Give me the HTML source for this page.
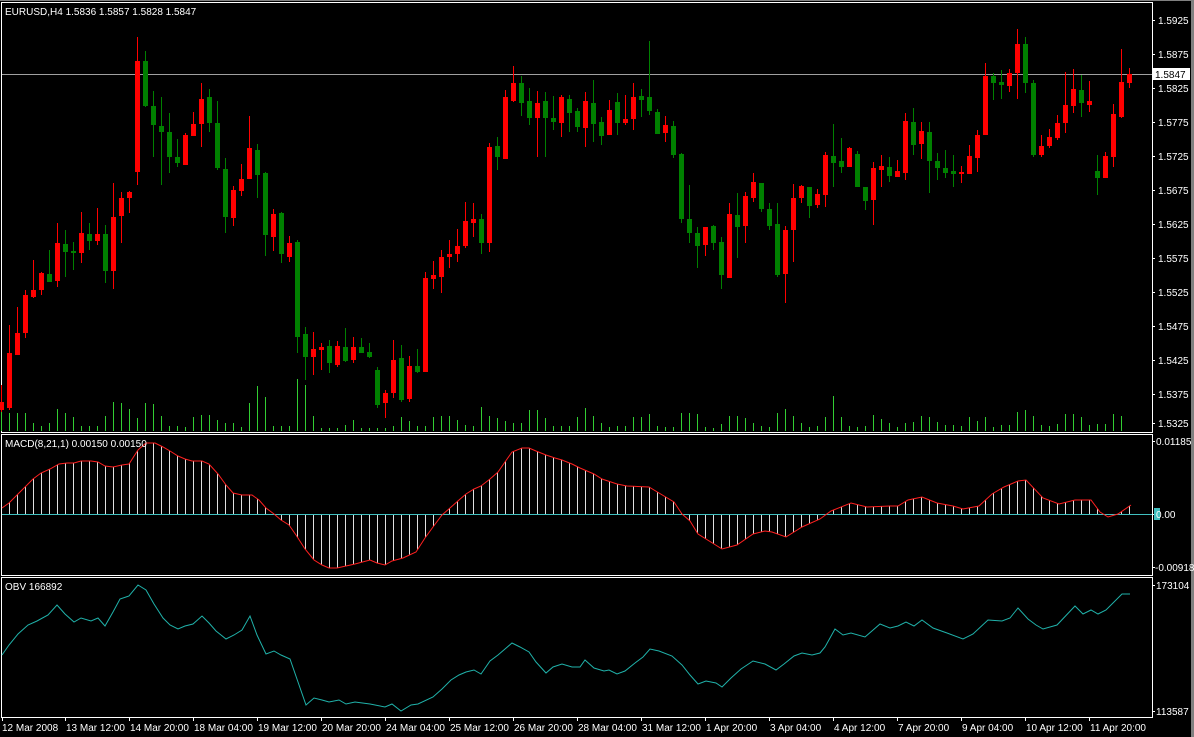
<!DOCTYPE html>
<html><head><meta charset="utf-8"><style>
html,body{margin:0;padding:0;background:#000;}
svg{display:block}
text{font-family:"Liberation Sans",sans-serif;font-size:10px;fill:#fff}
</style></head><body>
<svg width="1194" height="737" viewBox="0 0 1194 737" xmlns="http://www.w3.org/2000/svg">
<defs>
<pattern id="h" patternUnits="userSpaceOnUse" x="1" y="0" width="8" height="737"><rect x="0" y="0" width="1" height="737" fill="#e0e0e0"/></pattern>
</defs>
<rect width="1194" height="737" fill="#000"/>
<rect x="0" y="0" width="1194" height="1" fill="#808080"/>
<rect x="1191" y="0" width="3" height="737" fill="#808080"/>
<g fill="none" stroke="#fff" stroke-width="1">
<rect x="1.5" y="2.5" width="1151" height="430"/>
<rect x="1.5" y="434.5" width="1151" height="141"/>
<rect x="1.5" y="577.5" width="1151" height="140"/>
</g>
<path d="M2 74.5H1152" stroke="#a0a0a0" stroke-width="1"/>
<path stroke="#32cd32" stroke-width="1" d="M1.5 431V412M9.5 431V413M17.5 431V413M25.5 431V413M33.5 431V423M41.5 431V426M49.5 431V423M57.5 431V409M65.5 431V413M73.5 431V417M81.5 431V426M89.5 431V426M97.5 431V426M105.5 431V416M113.5 431V402M121.5 431V403M129.5 431V409M137.5 431V418M145.5 431V403M153.5 431V404M161.5 431V416M169.5 431V426M177.5 431V426M185.5 431V427M193.5 431V417M201.5 431V415M209.5 431V415M217.5 431V420M225.5 431V423M233.5 431V423M241.5 431V427M249.5 431V403M257.5 431V386M265.5 431V397M273.5 431V426M281.5 431V426M289.5 431V426M297.5 431V379M305.5 431V385M313.5 431V416M321.5 431V428M329.5 431V428M337.5 431V428M345.5 431V425M353.5 431V420M361.5 431V428M369.5 431V428M377.5 431V428M385.5 431V428M393.5 431V426M401.5 431V417M409.5 431V421M417.5 431V426M425.5 431V426M433.5 431V417M441.5 431V416M449.5 431V416M457.5 431V420M465.5 431V425M473.5 431V426M481.5 431V407M489.5 431V416M497.5 431V418M505.5 431V421M513.5 431V423M521.5 431V423M529.5 431V410M537.5 431V410M545.5 431V418M553.5 431V426M561.5 431V426M569.5 431V426M577.5 431V417M585.5 431V408M593.5 431V416M601.5 431V423M609.5 431V427M617.5 431V426M625.5 431V426M633.5 431V417M641.5 431V417M649.5 431V414M657.5 431V426M665.5 431V427M673.5 431V427M681.5 431V413M689.5 431V413M697.5 431V414M705.5 431V427M713.5 431V428M721.5 431V424M729.5 431V416M737.5 431V416M745.5 431V418M753.5 431V423M761.5 431V426M769.5 431V427M777.5 431V413M785.5 431V409M793.5 431V416M801.5 431V423M809.5 431V427M817.5 431V426M825.5 431V417M833.5 431V396M841.5 431V417M849.5 431V426M857.5 431V427M865.5 431V426M873.5 431V415M881.5 431V419M889.5 431V423M897.5 431V427M905.5 431V423M913.5 431V422M921.5 431V416M929.5 431V417M937.5 431V422M945.5 431V425M953.5 431V425M961.5 431V426M969.5 431V417M977.5 431V421M985.5 431V417M993.5 431V427M1001.5 431V425M1009.5 431V425M1017.5 431V412M1025.5 431V410M1033.5 431V416M1041.5 431V425M1049.5 431V426M1057.5 431V424M1065.5 431V414M1073.5 431V414M1081.5 431V417M1089.5 431V425M1097.5 431V424M1105.5 431V424M1113.5 431V414M1121.5 431V416"/>
<path stroke="#ff0000" stroke-width="1" d="M1.5 385V412M9.5 325V410M17.5 307V355M25.5 290V338M33.5 260V298M41.5 272V295M57.5 223V287M81.5 212V263M97.5 208V245M113.5 183V289M121.5 192V243M129.5 191V213M137.5 37V185M185.5 133V165M193.5 112V136M201.5 83V147M233.5 186V226M241.5 164V196M249.5 116V179M273.5 209V251M289.5 236V262M313.5 332V375M321.5 343V370M337.5 341V367M353.5 337V363M385.5 390V418M393.5 340V398M409.5 356V402M425.5 272V372M433.5 261V289M441.5 250V293M449.5 240V268M457.5 229V262M465.5 202V248M473.5 203V237M489.5 143V252M505.5 90V159M513.5 66V102M537.5 91V157M561.5 95V137M585.5 92V147M609.5 100V135M625.5 95V125M633.5 83V130M665.5 116V142M705.5 227V256M729.5 203V278M745.5 192V243M753.5 173V202M785.5 226V303M793.5 184V262M801.5 185V203M817.5 189V208M825.5 152V207M849.5 147V167M873.5 162V225M881.5 155V187M897.5 160V177M905.5 113V180M921.5 122V159M961.5 166V183M969.5 145V174M977.5 130V172M985.5 63V135M1009.5 69V92M1017.5 29V99M1041.5 135V157M1049.5 129V148M1057.5 115V140M1065.5 72V133M1073.5 69V113M1089.5 81V112M1105.5 152V178M1113.5 104V167M1121.5 49V118M1129.5 68V88"/>
<g fill="#ff0000">
<rect x="-1" y="402" width="5" height="8"/><rect x="7" y="353" width="5" height="55"/><rect x="15" y="333" width="5" height="22"/><rect x="23" y="295" width="5" height="38"/><rect x="31" y="290" width="5" height="7"/><rect x="39" y="273" width="5" height="17"/><rect x="55" y="243" width="5" height="38"/><rect x="79" y="233" width="5" height="20"/><rect x="95" y="234" width="5" height="7"/><rect x="111" y="217" width="5" height="54"/><rect x="119" y="198" width="5" height="18"/><rect x="127" y="192" width="5" height="6"/><rect x="135" y="61" width="5" height="111"/><rect x="183" y="135" width="5" height="30"/><rect x="191" y="124" width="5" height="12"/><rect x="199" y="99" width="5" height="25"/><rect x="231" y="190" width="5" height="28"/><rect x="239" y="179" width="5" height="12"/><rect x="247" y="148" width="5" height="31"/><rect x="271" y="214" width="5" height="23"/><rect x="287" y="243" width="5" height="14"/><rect x="311" y="349" width="5" height="8"/><rect x="319" y="347" width="5" height="3"/><rect x="335" y="346" width="5" height="19"/><rect x="351" y="347" width="5" height="13"/><rect x="383" y="393" width="5" height="10"/><rect x="391" y="360" width="5" height="33"/><rect x="407" y="366" width="5" height="33"/><rect x="423" y="278" width="5" height="94"/><rect x="431" y="275" width="5" height="4"/><rect x="439" y="257" width="5" height="20"/><rect x="447" y="254" width="5" height="3"/><rect x="455" y="246" width="5" height="8"/><rect x="463" y="221" width="5" height="25"/><rect x="471" y="219" width="5" height="4"/><rect x="487" y="147" width="5" height="96"/><rect x="503" y="97" width="5" height="62"/><rect x="511" y="83" width="5" height="18"/><rect x="535" y="103" width="5" height="15"/><rect x="559" y="97" width="5" height="26"/><rect x="583" y="101" width="5" height="27"/><rect x="607" y="110" width="5" height="25"/><rect x="623" y="119" width="5" height="4"/><rect x="631" y="97" width="5" height="22"/><rect x="663" y="125" width="5" height="8"/><rect x="703" y="227" width="5" height="18"/><rect x="727" y="214" width="5" height="64"/><rect x="743" y="196" width="5" height="30"/><rect x="751" y="182" width="5" height="16"/><rect x="783" y="230" width="5" height="44"/><rect x="791" y="198" width="5" height="32"/><rect x="799" y="186" width="5" height="12"/><rect x="815" y="194" width="5" height="11"/><rect x="823" y="155" width="5" height="40"/><rect x="847" y="148" width="5" height="19"/><rect x="871" y="168" width="5" height="32"/><rect x="879" y="166" width="5" height="4"/><rect x="895" y="171" width="5" height="6"/><rect x="903" y="121" width="5" height="52"/><rect x="919" y="131" width="5" height="13"/><rect x="959" y="172" width="5" height="2"/><rect x="967" y="156" width="5" height="18"/><rect x="975" y="135" width="5" height="23"/><rect x="983" y="76" width="5" height="59"/><rect x="1007" y="73" width="5" height="13"/><rect x="1015" y="44" width="5" height="29"/><rect x="1039" y="146" width="5" height="9"/><rect x="1047" y="137" width="5" height="9"/><rect x="1055" y="123" width="5" height="15"/><rect x="1063" y="105" width="5" height="18"/><rect x="1071" y="89" width="5" height="17"/><rect x="1087" y="101" width="5" height="4"/><rect x="1103" y="156" width="5" height="22"/><rect x="1111" y="114" width="5" height="43"/><rect x="1119" y="82" width="5" height="35"/><rect x="1127" y="74" width="5" height="9"/>
</g>
<path stroke="#008000" stroke-width="1" d="M49.5 250V282M65.5 230V277M73.5 242V270M89.5 223V250M105.5 225V283M145.5 51V107M153.5 91V157M161.5 97V185M169.5 113V173M177.5 139V167M209.5 89V132M217.5 101V170M225.5 158V233M257.5 144V198M265.5 172V256M281.5 212V263M297.5 240V353M305.5 327V380M329.5 340V373M345.5 328V362M361.5 338V353M369.5 343V358M377.5 367V408M401.5 345V402M417.5 349V373M481.5 214V254M497.5 137V170M521.5 76V116M529.5 88V125M545.5 92V157M553.5 96V130M569.5 95V132M577.5 108V132M593.5 80V142M601.5 117V145M617.5 93V135M641.5 89V117M649.5 41V115M657.5 109V134M673.5 121V158M681.5 153V223M689.5 185V243M697.5 227V268M713.5 225V250M721.5 237V289M737.5 193V258M761.5 183V212M769.5 203V230M777.5 203V277M809.5 187V218M833.5 124V187M841.5 138V173M857.5 151V187M865.5 187V210M889.5 157V182M913.5 108V155M929.5 122V193M937.5 153V180M945.5 150V178M953.5 155V187M993.5 73V100M1001.5 70V99M1025.5 37V93M1033.5 80V157M1081.5 75V117M1097.5 155V195"/>
<g fill="#008000">
<rect x="47" y="274" width="5" height="8"/><rect x="63" y="244" width="5" height="8"/><rect x="71" y="251" width="5" height="2"/><rect x="87" y="234" width="5" height="7"/><rect x="103" y="234" width="5" height="37"/><rect x="143" y="61" width="5" height="45"/><rect x="151" y="106" width="5" height="19"/><rect x="159" y="126" width="5" height="6"/><rect x="167" y="132" width="5" height="25"/><rect x="175" y="157" width="5" height="6"/><rect x="207" y="97" width="5" height="26"/><rect x="215" y="123" width="5" height="45"/><rect x="223" y="169" width="5" height="48"/><rect x="255" y="150" width="5" height="25"/><rect x="263" y="173" width="5" height="62"/><rect x="279" y="213" width="5" height="41"/><rect x="295" y="242" width="5" height="95"/><rect x="303" y="334" width="5" height="23"/><rect x="327" y="346" width="5" height="17"/><rect x="343" y="347" width="5" height="14"/><rect x="359" y="347" width="5" height="6"/><rect x="367" y="352" width="5" height="5"/><rect x="375" y="370" width="5" height="35"/><rect x="399" y="358" width="5" height="42"/><rect x="415" y="366" width="5" height="6"/><rect x="479" y="219" width="5" height="24"/><rect x="495" y="146" width="5" height="11"/><rect x="519" y="83" width="5" height="20"/><rect x="527" y="101" width="5" height="17"/><rect x="543" y="101" width="5" height="17"/><rect x="551" y="118" width="5" height="4"/><rect x="567" y="99" width="5" height="14"/><rect x="575" y="111" width="5" height="16"/><rect x="591" y="103" width="5" height="21"/><rect x="599" y="122" width="5" height="14"/><rect x="615" y="102" width="5" height="21"/><rect x="639" y="96" width="5" height="4"/><rect x="647" y="97" width="5" height="14"/><rect x="655" y="112" width="5" height="22"/><rect x="671" y="126" width="5" height="29"/><rect x="679" y="154" width="5" height="65"/><rect x="687" y="219" width="5" height="14"/><rect x="695" y="233" width="5" height="13"/><rect x="711" y="226" width="5" height="17"/><rect x="719" y="242" width="5" height="33"/><rect x="735" y="215" width="5" height="12"/><rect x="759" y="183" width="5" height="26"/><rect x="767" y="209" width="5" height="17"/><rect x="775" y="224" width="5" height="51"/><rect x="807" y="187" width="5" height="19"/><rect x="831" y="156" width="5" height="7"/><rect x="839" y="161" width="5" height="6"/><rect x="855" y="154" width="5" height="33"/><rect x="863" y="187" width="5" height="14"/><rect x="887" y="167" width="5" height="9"/><rect x="911" y="122" width="5" height="23"/><rect x="927" y="132" width="5" height="29"/><rect x="935" y="161" width="5" height="7"/><rect x="943" y="168" width="5" height="5"/><rect x="951" y="171" width="5" height="3"/><rect x="991" y="76" width="5" height="7"/><rect x="999" y="82" width="5" height="3"/><rect x="1023" y="44" width="5" height="39"/><rect x="1031" y="83" width="5" height="72"/><rect x="1079" y="90" width="5" height="13"/><rect x="1095" y="171" width="5" height="7"/>
</g>
<path fill="url(#h)" d="M2 508L9 503L18 494L33 479L41 473L50 469L59 464L67 463L74 463L81 461L91 461L98 462L105 466L113 467L122 465L129 464L138 450L146 443L155 443L163 447L170 451L178 456L185 459L192 461L202 461L209 464L218 474L226 485L233 493L242 495L252 495L259 500L266 508L274 514L281 520L289 525L296 535L305 549L314 560L322 565L329 568L337 568L346 566L355 564L370 560L377 563L385 565L392 561L403 558L416 552L425 538L433 527L442 515L450 508L459 500L466 494L474 489L481 486L490 479L498 472L505 462L512 452L522 448L529 448L536 451L546 455L555 458L562 460L572 464L580 468L594 474L602 479L617 484L627 486L649 487L659 493L674 502L682 514L690 521L698 534L714 544L722 549L737 545L753 534L765 531L772 532L786 537L802 527L820 519L831 511L851 503L867 507L890 506L898 506L908 500L922 497L937 503L953 506L963 509L979 506L992 494L1004 487L1018 481L1026 480L1043 498L1059 504L1075 500L1091 500L1100 512L1108 517L1118 514L1131 505L1131 514L2 514Z"/>
<path d="M2 514.5H1152" stroke="#40c0c0" stroke-width="1"/>
<polyline fill="none" stroke="#ff2020" stroke-width="1" points="2,508 9,503 18,494 33,479 41,473 50,469 59,464 67,463 74,463 81,461 91,461 98,462 105,466 113,467 122,465 129,464 138,450 146,443 155,443 163,447 170,451 178,456 185,459 192,461 202,461 209,464 218,474 226,485 233,493 242,495 252,495 259,500 266,508 274,514 281,520 289,525 296,535 305,549 314,560 322,565 329,568 337,568 346,566 355,564 370,560 377,563 385,565 392,561 403,558 416,552 425,538 433,527 442,515 450,508 459,500 466,494 474,489 481,486 490,479 498,472 505,462 512,452 522,448 529,448 536,451 546,455 555,458 562,460 572,464 580,468 594,474 602,479 617,484 627,486 649,487 659,493 674,502 682,514 690,521 698,534 714,544 722,549 737,545 753,534 765,531 772,532 786,537 802,527 820,519 831,511 851,503 867,507 890,506 898,506 908,500 922,497 937,503 953,506 963,509 979,506 992,494 1004,487 1018,481 1026,480 1043,498 1059,504 1075,500 1091,500 1100,512 1108,517 1118,514 1131,505"/>
<polyline fill="none" stroke="#20b2aa" stroke-width="1" points="2,655 9,645 18,634 28,625 37,621 48,615 57,605 65,614 74,622 81,618 91,621 98,618 105,626 113,612 120,599 129,596 138,585 146,590 154,604 163,618 170,625 178,629 185,626 193,624 202,616 209,623 216,631 226,639 234,635 242,630 250,616 257,635 266,654 274,651 281,655 290,659 298,682 306,705 314,698 322,700 329,702 339,700 346,704 355,702 370,704 385,707 392,704 401,711 411,705 418,704 433,697 442,689 451,680 459,675 466,672 474,670 481,674 490,661 498,655 505,649 512,643 520,647 529,652 536,662 546,673 553,667 562,664 572,667 580,667 585,660 594,668 604,671 609,670 617,674 625,671 635,663 643,657 650,649 659,651 672,656 682,665 690,675 698,684 706,681 716,683 722,687 731,678 741,669 753,661 765,664 776,670 784,664 794,656 802,653 812,655 820,653 825,647 835,629 843,635 851,633 865,637 880,624 890,628 898,626 906,622 914,626 922,620 933,628 947,633 963,639 973,634 988,620 1002,621 1010,618 1018,608 1028,619 1036,625 1043,629 1057,625 1075,606 1083,614 1091,610 1098,614 1106,610 1122,594 1130,594"/>
<path stroke="#fff" stroke-width="1" d="M1152 20.5h3M1152 54.5h3M1152 88.5h3M1152 122.5h3M1152 156.5h3M1152 190.5h3M1152 224.5h3M1152 258.5h3M1152 292.5h3M1152 326.5h3M1152 360.5h3M1152 394.5h3M1152 423.5h3M1152 441.5h3M1152 514.5h3M1152 567.5h3M1152 585.5h3M1152 711.5h3"/>
<path stroke="#fff" stroke-width="1" d="M2.5 717v4M65.5 717v4M129.5 717v4M193.5 717v4M257.5 717v4M321.5 717v4M385.5 717v4M449.5 717v4M513.5 717v4M577.5 717v4M641.5 717v4M705.5 717v4M769.5 717v4M833.5 717v4M897.5 717v4M961.5 717v4M1025.5 717v4M1089.5 717v4"/>
<g>
<text x="1158" y="24">1.5925</text>
<text x="1158" y="58">1.5875</text>
<text x="1158" y="92">1.5825</text>
<text x="1158" y="126">1.5775</text>
<text x="1158" y="160">1.5725</text>
<text x="1158" y="194">1.5675</text>
<text x="1158" y="228">1.5625</text>
<text x="1158" y="262">1.5575</text>
<text x="1158" y="296">1.5525</text>
<text x="1158" y="330">1.5475</text>
<text x="1158" y="364">1.5425</text>
<text x="1158" y="398">1.5375</text>
<text x="1158" y="427">1.5325</text>
</g>
<rect x="1153" y="68" width="37" height="12" fill="#fff"/>
<text x="1155" y="78" style="fill:#000">1.5847</text>
<text x="1156" y="445">0.01185</text>
<rect x="1154" y="508" width="6" height="12" fill="#40c0c0"/>
<text x="1156" y="518">0.00</text>
<text x="1155" y="571">-0.00918</text>
<text x="1156" y="589">173104</text>
<text x="1156" y="715">113587</text>
<text x="5" y="15">EURUSD,H4  1.5836 1.5857 1.5828 1.5847</text>
<text x="5" y="447">MACD(8,21,1) 0.00150 0.00150</text>
<text x="5" y="590">OBV 166892</text>
<g>
<text x="2" y="731">12 Mar 2008</text>
<text x="66" y="731">13 Mar 12:00</text>
<text x="130" y="731">14 Mar 20:00</text>
<text x="194" y="731">18 Mar 04:00</text>
<text x="258" y="731">19 Mar 12:00</text>
<text x="322" y="731">20 Mar 20:00</text>
<text x="386" y="731">24 Mar 04:00</text>
<text x="450" y="731">25 Mar 12:00</text>
<text x="514" y="731">26 Mar 20:00</text>
<text x="578" y="731">28 Mar 04:00</text>
<text x="642" y="731">31 Mar 12:00</text>
<text x="706" y="731">1 Apr 20:00</text>
<text x="770" y="731">3 Apr 04:00</text>
<text x="834" y="731">4 Apr 12:00</text>
<text x="898" y="731">7 Apr 20:00</text>
<text x="962" y="731">9 Apr 04:00</text>
<text x="1026" y="731">10 Apr 12:00</text>
<text x="1090" y="731">11 Apr 20:00</text>
</g>
</svg>
</body></html>
